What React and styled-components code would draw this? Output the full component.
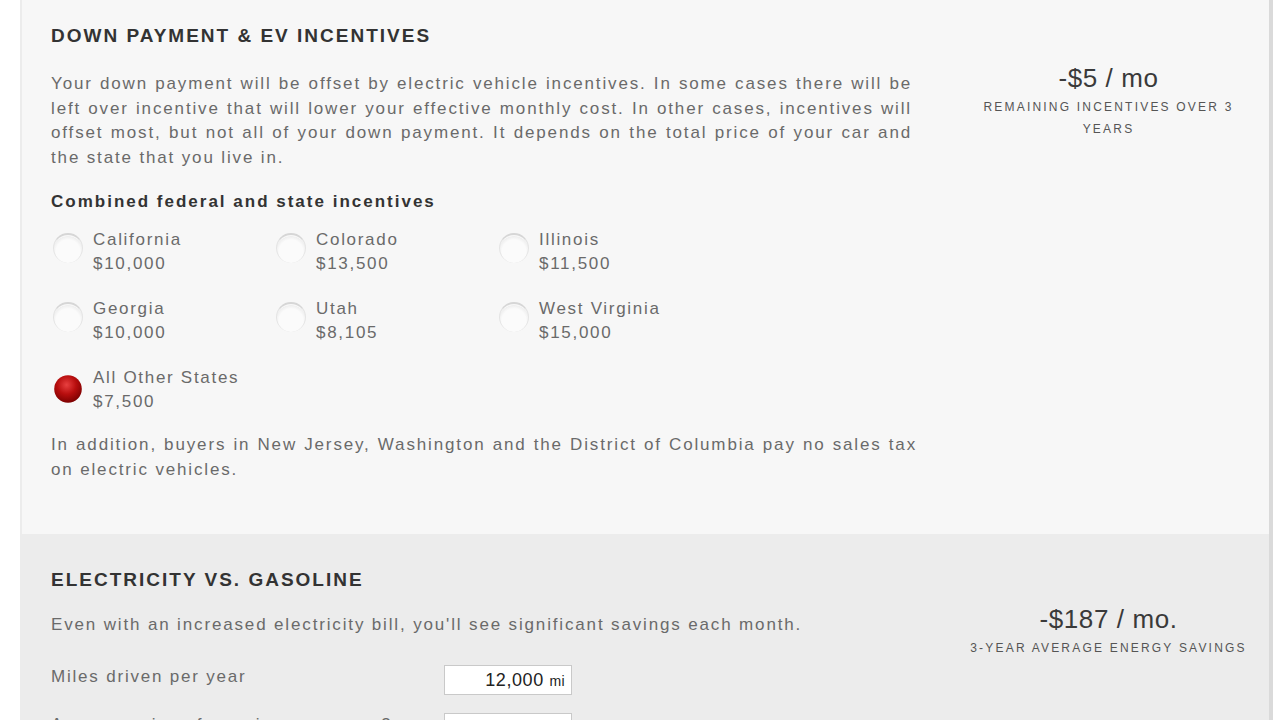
import React from "react";
import styled, { createGlobalStyle } from "styled-components";

const GlobalStyle = createGlobalStyle`
  html, body {
    margin: 0;
    padding: 0;
    background: #ffffff;
    font-family: "Liberation Sans", Arial, sans-serif;
    overflow: hidden;
  }
`;

const Page = styled.div`
  width: 1280px;
  height: 720px;
  overflow: hidden;
  background: #ffffff;
`;

const Panel = styled.div`
  margin-left: 20px;
  width: 1247px;
  border-left: 2px solid #ececec;
  border-right: 4px solid #dadada;
`;

const Section = styled.div`
  display: flex;
  background: ${(p) => p.$bg};
  padding: ${(p) => p.$pad};
`;

const Main = styled.div`
  width: 897px;
  flex-shrink: 0;
`;

const Side = styled.div`
  flex: 1;
  display: flex;
  flex-direction: column;
  align-items: center;
  text-align: center;
  padding-top: ${(p) => p.$top}px;
`;

const Heading = styled.h2`
  margin: 0;
  font-size: 19px;
  font-weight: bold;
  color: #333;
  letter-spacing: 2px;
  line-height: 22px;
`;

const Text = styled.p`
  margin: ${(p) => p.$m || "0"};
  width: ${(p) => p.$w}px;
  font-size: 17px;
  line-height: 24.5px;
  color: #6a6a6a;
  letter-spacing: 1.85px;
  text-align: justify;
`;

const SubHeading = styled.h3`
  margin: 20px 0 0;
  font-size: 17px;
  font-weight: bold;
  color: #333;
  line-height: 24px;
  letter-spacing: 2px;
`;

const Big = styled.div`
  font-size: 26px;
  color: #3a3a3a;
  line-height: 32px;
  letter-spacing: 0.6px;
`;

const Caption = styled.div`
  width: ${(p) => p.$w}px;
  margin-top: 2px;
  font-size: 12px;
  line-height: 22px;
  color: #555;
  text-transform: uppercase;
  letter-spacing: 2.2px;
`;

const Grid = styled.div`
  display: grid;
  grid-template-columns: repeat(3, 223px);
  row-gap: 21px;
  margin-top: 14px;
`;

const Option = styled.label`
  display: flex;
  align-items: flex-start;
  gap: 10px;
`;

const Radio = styled.span`
  width: 30px;
  height: 30px;
  border-radius: 50%;
  flex-shrink: 0;
  margin: 5px 0 0 2px;
  box-sizing: border-box;
  ${(p) =>
    p.$on
      ? `
    margin-top: 8px;
    background: radial-gradient(circle at 45% 35%, #e84040 0%, #b80e0e 40%, #7a0000 78%, transparent 80%);
    transform: scale(0.92);
  `
      : `
    background: radial-gradient(circle at 50% 60%, #fbfbfb 55%, #efefef 70%, transparent 72%);
    border-top: 2px solid #d6d6d6;
    border-left: 1px solid #e4e4e4;
    border-right: 1px solid #e4e4e4;
  `}
`;

const OptionText = styled.div`
  font-size: 17px;
  line-height: 24px;
  color: #6a6a6a;
  letter-spacing: 1.7px;
  white-space: nowrap;
`;

const Field = styled.div`
  display: flex;
  align-items: center;
  height: 30px;
  margin-top: ${(p) => p.$m}px;
`;

const FieldLabel = styled.span`
  width: 393px;
  font-size: 17px;
  color: #6a6a6a;
  letter-spacing: 1.8px;
  white-space: nowrap;
  overflow: hidden;
  margin-top: -5px;
`;

const InputBox = styled.div`
  width: 128px;
  height: 30px;
  box-sizing: border-box;
  border: 1px solid #c9c9c9;
  background: #fff;
  text-align: right;
  padding: 0 6px;
  font-size: 18px;
  line-height: 28px;
  color: #222;
  letter-spacing: 0.6px;
`;

const Unit = styled.span`
  font-size: 14px;
  letter-spacing: 0.4px;
`;

const options = [
  ["California", "$10,000"],
  ["Colorado", "$13,500"],
  ["Illinois", "$11,500"],
  ["Georgia", "$10,000"],
  ["Utah", "$8,105"],
  ["West Virginia", "$15,000"],
  ["All Other States", "$7,500", true],
];

export default function App() {
  return (
    <Page>
      <GlobalStyle />
      <Panel>
        <Section $bg="#f7f7f7" $pad="25px 0 52px 29px">
          <Main>
            <Heading>DOWN PAYMENT &amp; EV INCENTIVES</Heading>
            <Text $m="25px 0 0" $w={861}>
              Your down payment will be offset by electric vehicle incentives. In some cases there will be
              left over incentive that will lower your effective monthly cost. In other cases, incentives will
              offset most, but not all of your down payment. It depends on the total price of your car and
              the state that you live in.
            </Text>
            <SubHeading>Combined federal and state incentives</SubHeading>
            <Grid>
              {options.map(([name, amount, on]) => (
                <Option key={name}>
                  <Radio $on={on} />
                  <OptionText>
                    {name}
                    <br />
                    {amount}
                  </OptionText>
                </Option>
              ))}
            </Grid>
            <Text $m="19px 0 0" $w={866}>
              In addition, buyers in New Jersey, Washington and the District of Columbia pay no sales tax
              on electric vehicles.
            </Text>
          </Main>
          <Side $top={37}>
            <Big>-$5 / mo</Big>
            <Caption $w={265}>Remaining incentives over 3 years</Caption>
          </Side>
        </Section>
        <Section $bg="#ececec" $pad="35px 0 40px 29px">
          <Main>
            <Heading>ELECTRICITY VS. GASOLINE</Heading>
            <Text $m="22px 0 0" $w={866}>
              Even with an increased electricity bill, you'll see significant savings each month.
            </Text>
            <Field $m={27}>
              <FieldLabel>Miles driven per year</FieldLabel>
              <InputBox>
                12,000 <Unit>mi</Unit>
              </InputBox>
            </Field>
            <Field $m={18}>
              <FieldLabel>Average price of premium gas over 3 years</FieldLabel>
              <InputBox>$4.05</InputBox>
            </Field>
          </Main>
          <Side $top={34}>
            <Big>-$187 / mo.</Big>
            <Caption $w={300}>3-year average energy savings</Caption>
          </Side>
        </Section>
      </Panel>
    </Page>
  );
}
